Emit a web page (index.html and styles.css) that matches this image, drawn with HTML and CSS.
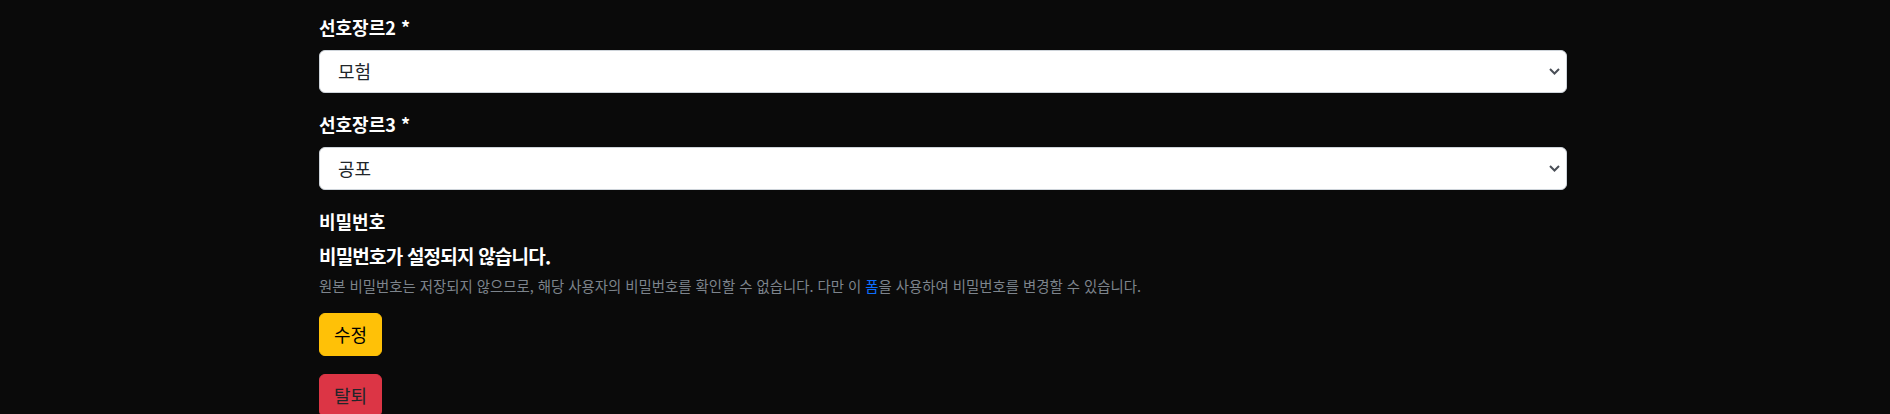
FILE: index.html
```html
<!DOCTYPE html>
<html lang="ko">
<head>
<meta charset="utf-8">
<title>회원 정보</title>
<link rel="stylesheet" href="styles.css">
</head>
<body>
<main class="container">
  <div class="field">
    <label class="form-label" for="genre2">선호장르2 *</label>
    <select id="genre2" class="form-select">
      <option>모험</option>
    </select>
  </div>
  <div class="field">
    <label class="form-label" for="genre3">선호장르3 *</label>
    <select id="genre3" class="form-select">
      <option>공포</option>
    </select>
  </div>
  <div class="field field-pw">
    <label class="form-label">비밀번호</label>
    <div class="pw-title">비밀번호가 설정되지 않습니다.</div>
    <div class="help">원본 비밀번호는 저장되지 않으므로, 해당 사용자의 비밀번호를 확인할 수 없습니다. 다만 이 <a href="#" class="link">폼</a>을 사용하여 비밀번호를 변경할 수 있습니다.</div>
  </div>
  <div class="action">
    <button class="btn btn-warning" type="submit">수정</button>
  </div>
  <div class="action">
    <button class="btn btn-danger" type="button">탈퇴</button>
  </div>
</main>
</body>
</html>
```
FILE: styles.css
```css
html, body {
  margin: 0;
  padding: 0;
  background: #0a0a0a;
}
body {
  font-family: "Noto Sans CJK KR", "Noto Sans", sans-serif;
  font-size: 18px;
  line-height: 27px;
  color: #ffffff;
}
.container {
  width: 1248px;
  margin-left: 319px;
  padding-top: 14px;
}
.field {
  margin-bottom: 18px;
}
.field-pw {
  margin-bottom: 16px;
}
.form-label {
  display: block;
  margin-bottom: 9px;
  font-weight: 700;
  color: #ffffff;
}
.form-select {
  display: block;
  width: 100%;
  height: 43px;
  box-sizing: border-box;
  padding: 6px 40px 6px 18px;
  font-family: inherit;
  font-size: 18px;
  line-height: 27px;
  color: #212529;
  background-color: #ffffff;
  background-image: url("data:image/svg+xml,%3Csvg xmlns='http://www.w3.org/2000/svg' width='11' height='7' viewBox='0 0 11 7'%3E%3Cpath d='M1 1l4.5 4.5L10 1' fill='none' stroke='%234a4f57' stroke-width='2'/%3E%3C/svg%3E");
  background-repeat: no-repeat;
  background-position: right 6px center;
  background-size: 11px 7px;
  border: 1px solid #ced4da;
  border-radius: 6px;
  appearance: none;
  -webkit-appearance: none;
}
.pw-title {
  margin-top: 2px;
  font-size: 19px;
  font-weight: 700;
  line-height: 24px;
  letter-spacing: -0.8px;
}
.help {
  margin-top: 7px;
  font-size: 14.4px;
  line-height: 21.6px;
  color: #7d848c;
}
.link {
  color: #0d6efd;
  text-decoration: none;
}
.action {
  margin-bottom: 18px;
}
.btn {
  display: inline-block;
  box-sizing: border-box;
  height: 43px;
  padding: 6px 14px;
  font-family: inherit;
  font-size: 18px;
  line-height: 27px;
  border: 1px solid transparent;
  border-radius: 6px;
  cursor: pointer;
}
.btn-warning {
  background: #ffc107;
  border-color: #ffc107;
  color: #000000;
}
.btn-danger {
  background: #dc3545;
  border-color: #dc3545;
  color: #212529;
}
```
